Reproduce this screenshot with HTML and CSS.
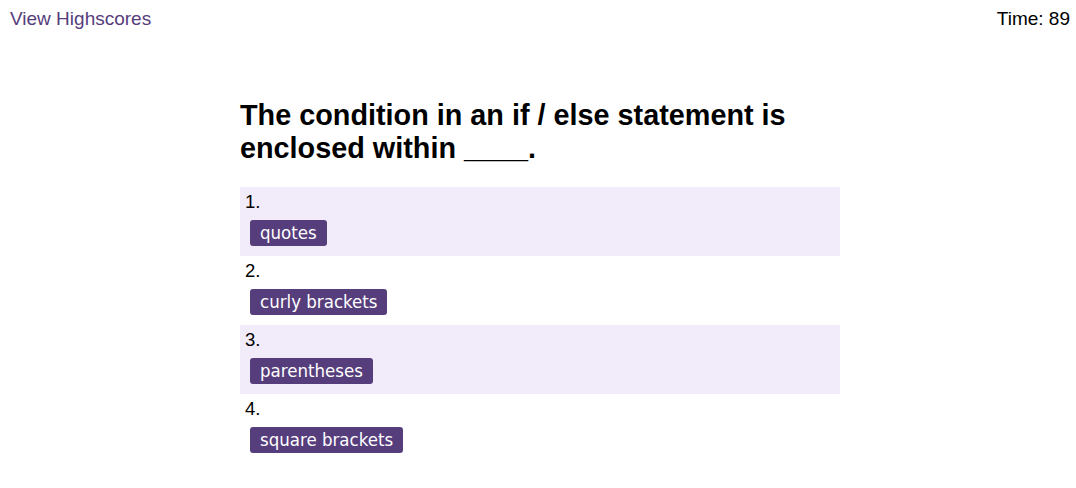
FILE: index.html
```html
<!DOCTYPE html>
<html>
<head>
<meta charset="utf-8">
<link rel="stylesheet" href="styles.css">
</head>
<body>
<header class="top">
  <a class="scores" href="#">View Highscores</a>
  <span class="timer">Time: 89</span>
</header>
<main class="quiz">
  <h2 class="question">The condition in an if / else statement is enclosed within ____.</h2>
  <ol class="answers">
    <li class="answer alt"><span class="num">1.</span><button class="choice">quotes</button></li>
    <li class="answer"><span class="num">2.</span><button class="choice">curly brackets</button></li>
    <li class="answer alt"><span class="num">3.</span><button class="choice">parentheses</button></li>
    <li class="answer"><span class="num">4.</span><button class="choice">square brackets</button></li>
  </ol>
</main>
</body>
</html>
```
FILE: styles.css
```css
html, body {
  margin: 0;
  padding: 0;
  background: #ffffff;
  font-family: "Liberation Sans", Arial, sans-serif;
  color: #000;
}
.top {
  display: flex;
  justify-content: space-between;
  align-items: center;
  padding: 8px 6px 0 10px;
  font-size: 19px;
  line-height: 22px;
}
.scores {
  color: #563d7c;
  text-decoration: none;
}
.quiz {
  width: 600px;
  margin-left: calc(50% - 298px);
  padding-top: 69px;
}
.question {
  margin: 0 0 22px 0;
  font-size: 28.8px;
  line-height: 33px;
  font-weight: bold;
}
.answers {
  list-style: none;
  margin: 0;
  padding: 0;
}
.answer {
  display: flex;
  flex-direction: column;
  align-items: flex-start;
  height: 69px;
  box-sizing: border-box;
  padding: 4px 5px 0 5px;
  font-size: 18.5px;
  line-height: 22px;
}
.answer.alt {
  background: #f2ecfa;
}
.choice {
  margin: 7px 0 0 5px;
  height: 26px;
  padding: 0 10px;
  border: none;
  border-radius: 3px;
  background: #563d7c;
  color: #ffffff;
  font-family: "DejaVu Sans Condensed", "DejaVu Sans", sans-serif;
  font-size: 18.5px;
  line-height: 26px;
}
```
